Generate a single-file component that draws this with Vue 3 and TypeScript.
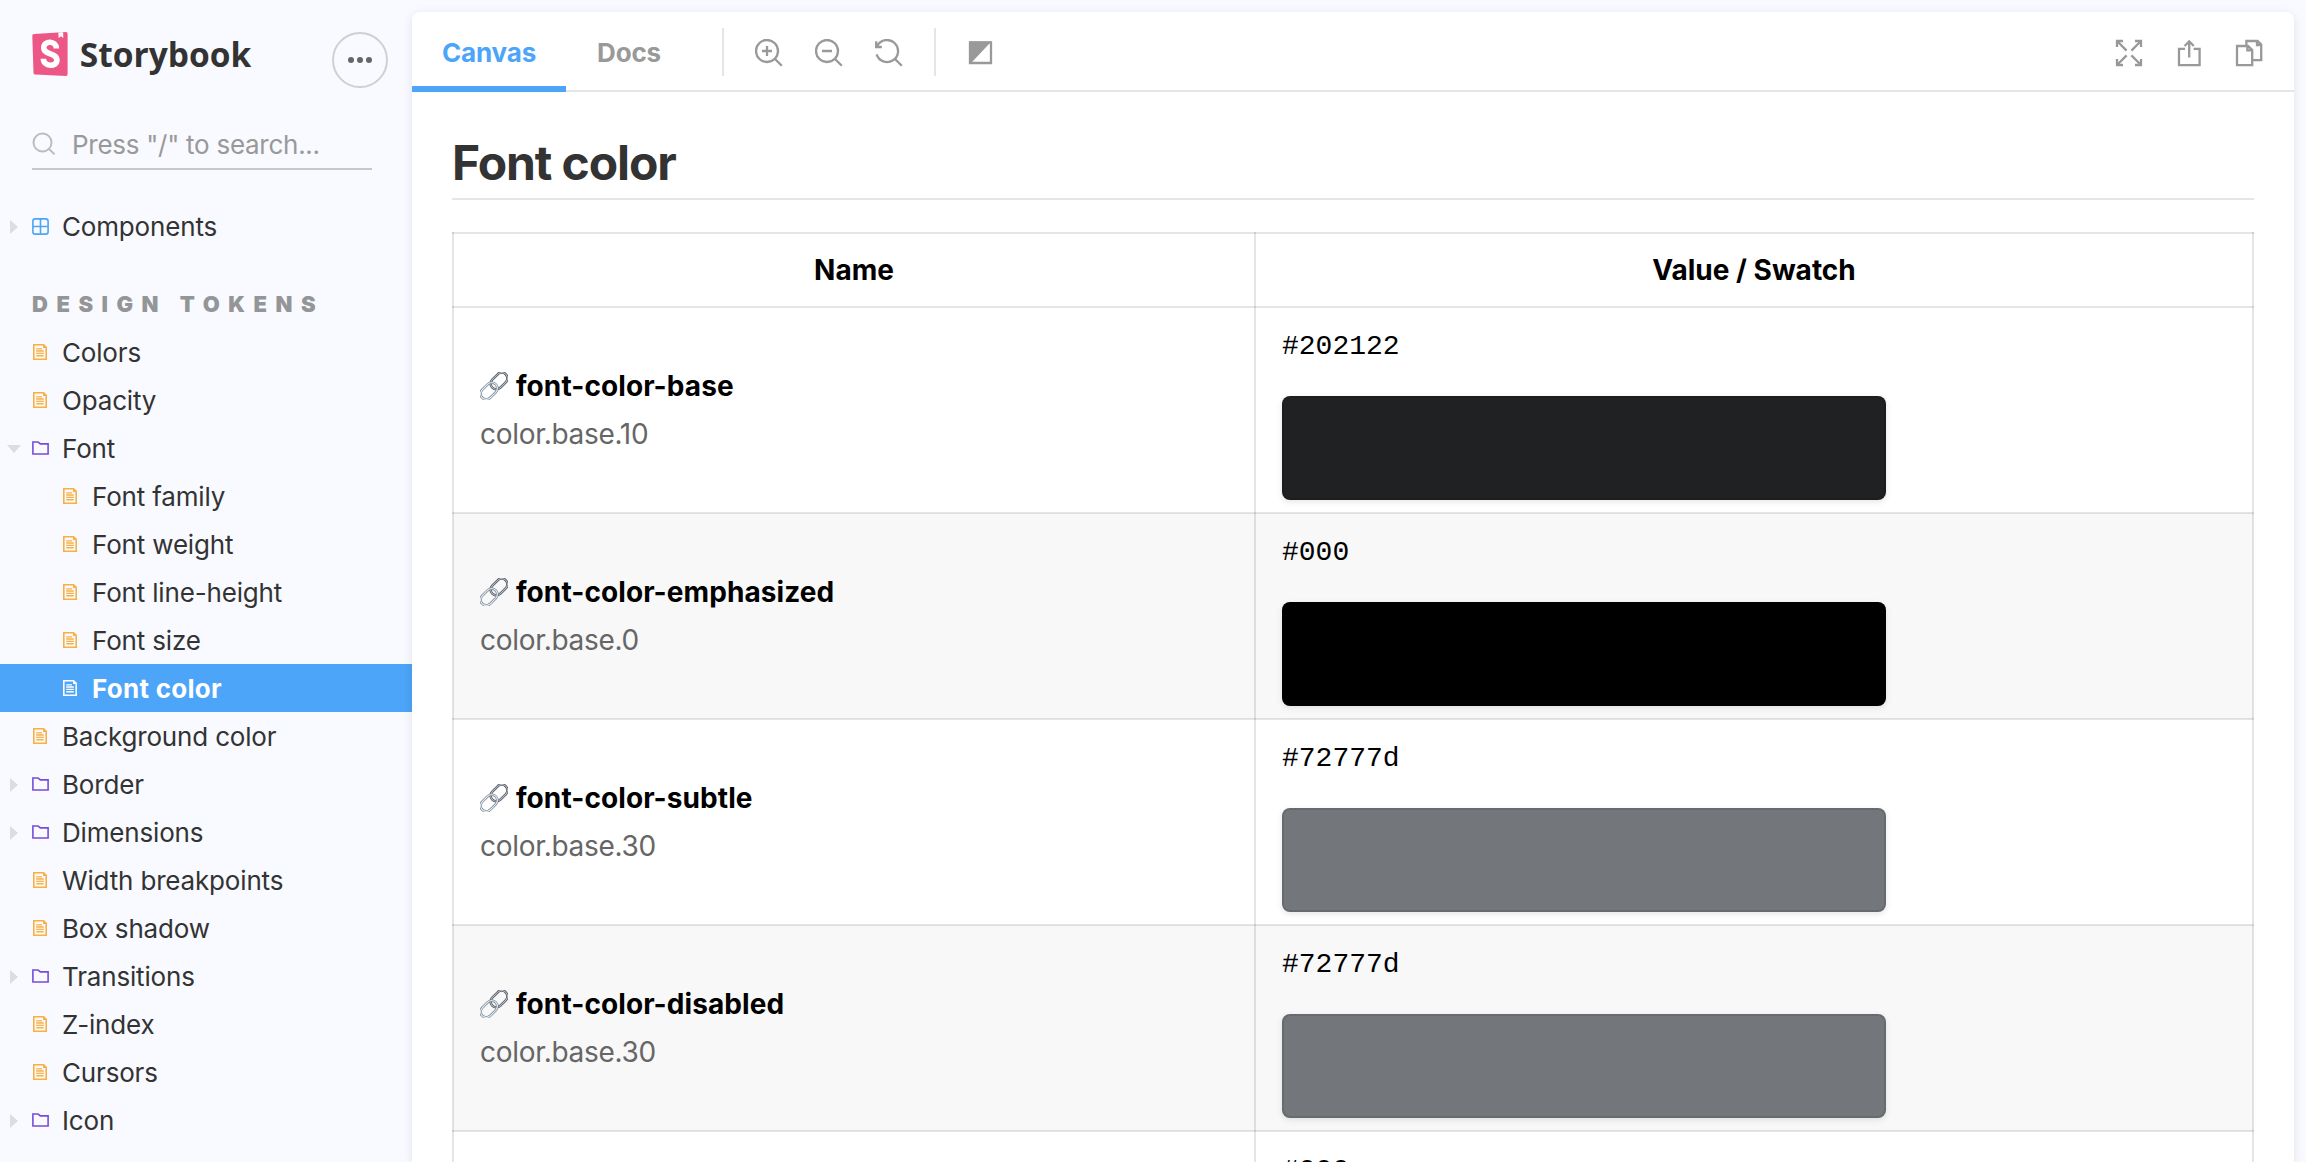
<script setup lang="ts">
type Kind = 'component' | 'document' | 'folder'

interface NavItem {
  label: string
  kind: Kind
  level?: number
  state?: 'open' | 'closed'
  selected?: boolean
}

interface Token {
  name: string
  source: string
  value: string
  fill: string
}

const items: NavItem[] = [
  { label: 'Colors', kind: 'document' },
  { label: 'Opacity', kind: 'document' },
  { label: 'Font', kind: 'folder', state: 'open' },
  { label: 'Font family', kind: 'document', level: 1 },
  { label: 'Font weight', kind: 'document', level: 1 },
  { label: 'Font line-height', kind: 'document', level: 1 },
  { label: 'Font size', kind: 'document', level: 1 },
  { label: 'Font color', kind: 'document', level: 1, selected: true },
  { label: 'Background color', kind: 'document' },
  { label: 'Border', kind: 'folder', state: 'closed' },
  { label: 'Dimensions', kind: 'folder', state: 'closed' },
  { label: 'Width breakpoints', kind: 'document' },
  { label: 'Box shadow', kind: 'document' },
  { label: 'Transitions', kind: 'folder', state: 'closed' },
  { label: 'Z-index', kind: 'document' },
  { label: 'Cursors', kind: 'document' },
  { label: 'Icon', kind: 'folder', state: 'closed' },
]

const tokens: Token[] = [
  { name: 'font-color-base', source: 'color.base.10', value: '#202122', fill: '#202122' },
  { name: 'font-color-emphasized', source: 'color.base.0', value: '#000', fill: '#000' },
  { name: 'font-color-subtle', source: 'color.base.30', value: '#72777d', fill: '#73767b' },
  { name: 'font-color-disabled', source: 'color.base.30', value: '#72777d', fill: '#73767b' },
  { name: 'font-color-inverted', source: 'color.base.0', value: '#000', fill: '#000' },
]
</script>

<template>
  <div class="app">
    <nav class="sidebar">
      <header class="brand">
        <svg class="logo" width="240" height="56" viewBox="0 0 240 56">
          <path d="M0.3 3.6 Q0.2 2 2 1.9 L34 0 Q35.6 0 35.6 2 V42 Q35.6 44 34 44 L3.2 42.6 Q1.6 42.5 1.5 41 Z" fill="#ed5785" />
          <path d="M26.4 0.5 L31.1 0.2 L31.3 6 L29 4.3 L26.6 6.1 Z" fill="#fff" />
          <path
            d="M24.4 16.4 C24.4 8.6 11.8 8.2 11.8 15.8 C11.8 23.2 24.9 20.4 24.9 28 C24.9 35.4 11.4 35 11.4 26.8"
            fill="none" stroke="#fff" stroke-width="5.6"
          />
          <text x="47.8" y="34.5" textLength="171.5" lengthAdjust="spacingAndGlyphs">Storybook</text>
        </svg>
        <button class="menu" type="button" aria-label="Shortcuts">
          <i /><i /><i />
        </button>
      </header>

      <div class="search">
        <svg width="24" height="24" viewBox="0 0 24 24" fill="none" stroke="#bbbcbe" stroke-width="2">
          <circle cx="10.5" cy="10.5" r="9" />
          <path d="M17 17 L22.6 22.4" />
        </svg>
        <span>Press "/" to search...</span>
      </div>

      <div class="row first">
        <span class="caret closed" />
        <span class="glyph">
          <svg width="17" height="17" viewBox="0 0 17 17" fill="none" stroke="#4ca5f5" stroke-width="1.6">
            <rect x="0.9" y="0.9" width="15.2" height="15.2" rx="2.4" />
            <path d="M8.5 1V16M1 8.5H16" />
          </svg>
        </span>
        <span class="label">Components</span>
      </div>

      <h2 class="group">DESIGN TOKENS</h2>

      <div
        v-for="item in items"
        :key="item.label"
        class="row"
        :class="{ nested: item.level, selected: item.selected }"
      >
        <span class="caret" :class="item.state" />
        <span class="glyph" :class="item.kind">
          <svg v-if="item.kind === 'folder'" width="17" height="14" viewBox="0 0 17 14" fill="none" stroke="currentColor" stroke-width="1.6">
            <path d="M0.9 1H6L8.4 2.9H16.1V13H0.9Z" />
          </svg>
          <svg v-else width="14" height="16" viewBox="0 0 14 16" fill="none" stroke="currentColor" stroke-width="1.6">
            <path d="M0.8 0.8H10.6L13.2 3.4V15.2H0.8Z" />
            <path d="M10 0.8V4H13.2Z" fill="currentColor" stroke="none" />
            <path d="M3.2 4.8H9M3.2 7H10.8M3.2 9.3H10.8M3.2 11.7H10.8" stroke-width="1.35" />
          </svg>
        </span>
        <span class="label">{{ item.label }}</span>
      </div>
    </nav>

    <main class="panel">
      <div class="toolbar">
        <div class="tab active">Canvas</div>
        <div class="tab docs">Docs</div>
        <span class="divider" />
        <div class="tools">
          <svg class="tool" viewBox="0 0 28 28">
            <circle cx="12" cy="12" r="11" />
            <path d="M12 7V17M7 12H17M20 20L26.8 26.8" />
          </svg>
          <svg class="tool" viewBox="0 0 28 28">
            <circle cx="12" cy="12" r="11" />
            <path d="M7 12H17M20 20L26.8 26.8" />
          </svg>
          <svg class="tool" viewBox="0 0 28 28">
            <path d="M1.6 15.4A11 11 0 1 0 2.4 6.8M1.2 2.2V8H6.8M20 20L26.8 26.8" />
          </svg>
        </div>
        <span class="divider" />
        <svg class="tool backgrounds" viewBox="0 0 28 28">
          <path d="M3 3.4H24V24H3Z" />
          <path d="M2 2.4H24.4L3.4 24.8H2Z" class="solid" />
        </svg>
        <div class="actions">
          <svg class="tool" viewBox="0 0 28 28">
            <path d="M2 8V2H8M2 2L11.6 11.6M20 2H26V8M26 2L16.4 11.6M2 20V26H8M2 26L11.6 16.4M20 26H26V20M26 26L16.4 16.4" />
          </svg>
          <svg class="tool" viewBox="0 0 28 28">
            <path d="M10 9.8H4V26.2H24.6V9.8H18.6M14.2 18.4V3M9.6 7L14.2 2.4L18.8 7" />
          </svg>
          <svg class="tool" viewBox="0 0 28 28">
            <path d="M2 7H13L17.2 11V26.2H2ZM12.4 7.4V11.4H17" />
            <path d="M11.4 6.6V2H22.6L26.2 5.6V21.2H17.6M22 2.4V6H26" />
          </svg>
        </div>
      </div>

      <div class="story">
        <h1>Font color</h1>
        <table>
          <colgroup>
            <col class="name-col">
            <col>
          </colgroup>
          <thead>
            <tr>
              <th>Name</th>
              <th>Value / Swatch</th>
            </tr>
          </thead>
          <tbody>
            <tr v-for="token in tokens" :key="token.name">
              <td>
                <div class="token">
                  <svg width="28" height="28" viewBox="0 0 28 28" fill="none">
                    <g transform="rotate(-45 14 14)">
                      <rect x="11.6" y="8.3" width="19" height="11.4" rx="5.7" stroke="#55555d" stroke-width="2.5" />
                      <rect x="11.6" y="8.3" width="19" height="11.4" rx="5.7" stroke="#b9c4d0" stroke-width="1" />
                      <rect x="-2.6" y="8.3" width="19" height="11.4" rx="5.7" stroke="#6d7882" stroke-width="2.5" />
                      <rect x="-2.6" y="8.3" width="19" height="11.4" rx="5.7" stroke="#dce8f2" stroke-width="1.3" />
                    </g>
                  </svg>
                  <strong>{{ token.name }}</strong>
                </div>
                <div class="source">{{ token.source }}</div>
              </td>
              <td>
                <code>{{ token.value }}</code>
                <div class="swatch" :style="{ backgroundColor: token.fill }" />
              </td>
            </tr>
          </tbody>
        </table>
      </div>
    </main>
  </div>
</template>

<style>
body {
  background: #f8faff;
  overflow: hidden;
}
</style>

<style scoped>
.app {
  box-sizing: border-box;
  display: flex;
  height: 1162px;
  padding: 12px 12px 0 0;
  overflow: hidden;
  background: #f8faff;
  color: #333;
  font-family: Inter, "Liberation Sans", sans-serif;
  font-size: 26px;
}

.sidebar {
  width: 412px;
  flex: none;
}

.brand {
  display: flex;
  justify-content: space-between;
  margin: 20px 24px 0 32px;
  height: 56px;
}

.logo text {
  font-family: "Open Sans", sans-serif;
  font-size: 34px;
  font-weight: 700;
  fill: #333;
}

.menu {
  box-sizing: border-box;
  display: flex;
  align-items: center;
  justify-content: center;
  gap: 3px;
  width: 56px;
  height: 56px;
  padding: 0;
  border: 2px solid #cfd0d4;
  border-radius: 50%;
  background: transparent;
}

.menu i {
  width: 6px;
  height: 6px;
  border-radius: 50%;
  background: #666;
}

.search {
  box-sizing: border-box;
  display: flex;
  align-items: center;
  width: 340px;
  height: 50px;
  margin: 32px 0 0 32px;
  border-bottom: 2px solid #c6c8cc;
  color: #999;
}

.search span {
  margin-left: 16px;
  padding-top: 1px;
  letter-spacing: -0.27px;
}

.row {
  display: flex;
  align-items: center;
  height: 48px;
}

.row.first {
  margin-top: 32px;
}

.caret {
  display: flex;
  justify-content: center;
  width: 28px;
  margin-right: 3px;
  padding-top: 2px;
}

.caret.closed::before {
  content: "";
  margin-right: 1px;
  border: 7px solid transparent;
  border-left: 8px solid #dcdddf;
  border-right: 0;
}

.caret.open::before {
  content: "";
  margin-right: 1px;
  border: 7px solid transparent;
  border-top: 8px solid #dcdddf;
  border-bottom: 0;
}

.glyph {
  display: flex;
  justify-content: center;
  width: 18px;
  margin-right: 13px;
}

.glyph.document {
  color: #f8b040;
}

.glyph.folder {
  color: #774dd7;
}

.nested .glyph {
  margin-left: 30px;
}

.label {
  padding-top: 1px;
  letter-spacing: -0.17px;
}

.selected {
  background: #4ca5f8;
  color: #fff;
  font-weight: 700;
}

.selected .glyph {
  color: #fff;
}

.selected .label {
  letter-spacing: 0.28px;
}

.group {
  margin: 38px 0 8px 32px;
  font-size: 22px;
  font-weight: 900;
  line-height: 32px;
  letter-spacing: 8.5px;
  color: #949597;
}

.panel {
  flex: 1;
  min-width: 0;
  border-radius: 8px 8px 0 0;
  background: #fff;
  box-shadow: 0 2px 10px rgba(0, 0, 0, 0.1);
}

.toolbar {
  box-sizing: border-box;
  display: flex;
  align-items: center;
  height: 80px;
  border-bottom: 2px solid #e6e6e6;
  color: #999;
}

.tab {
  box-sizing: border-box;
  height: 80px;
  margin-bottom: -2px;
  padding: 6px 30px 0;
  border-bottom: 6px solid transparent;
  font-weight: 700;
  line-height: 70px;
  letter-spacing: -0.15px;
}

.tab.active {
  width: 154px;
  border-color: #4ca5f8;
  color: #4ca5f8;
}

.tab.docs {
  width: 156px;
  padding-left: 31px;
}

.divider {
  width: 2px;
  height: 48px;
  margin-top: 2px;
  background: #e6e6e6;
}

.tools {
  display: flex;
  gap: 32px;
  margin: 3px 31px 0;
}

.tool {
  width: 28px;
  height: 28px;
  fill: none;
  stroke: #999;
  stroke-width: 2.3;
}

.tool .solid {
  fill: #999;
  stroke: none;
}

.backgrounds {
  margin: 3px 0 0 31px;
}

.actions {
  display: flex;
  gap: 32px;
  margin: 3px 31px 0 auto;
}

.story {
  height: 1070px;
  box-sizing: border-box;
  padding: 38px 40px 0;
  overflow: hidden;
}

h1 {
  box-sizing: border-box;
  height: 70px;
  margin: 0 0 32px;
  border-bottom: 2px solid #e6e6e6;
  font-size: 48px;
  line-height: 66px;
  letter-spacing: -1.1px;
}

table {
  width: 1802px;
  border-collapse: collapse;
  table-layout: fixed;
  color: #000;
  font-size: 28px;
  line-height: 48px;
}

.name-col {
  width: 802px;
}

th,
td {
  padding: 12px 26px;
  border: 2px solid rgba(0, 0, 0, 0.1);
}

tbody tr:nth-child(even) {
  background: #f8f8f8;
}

.token {
  display: flex;
  align-items: center;
  gap: 8px;
  letter-spacing: 0.08px;
}

.source {
  color: #666;
  letter-spacing: -0.3px;
}

code {
  display: block;
  box-sizing: border-box;
  height: 48px;
  padding-top: 3px;
  font-family: "Liberation Mono", monospace;
  font-size: 28px;
}

.swatch {
  box-sizing: border-box;
  width: 604px;
  height: 104px;
  margin-top: 28px;
  border: 2px solid rgba(0, 0, 0, 0.1);
  border-radius: 8px;
  box-shadow: 0 2px 6px rgba(0, 0, 0, 0.1);
}
</style>
